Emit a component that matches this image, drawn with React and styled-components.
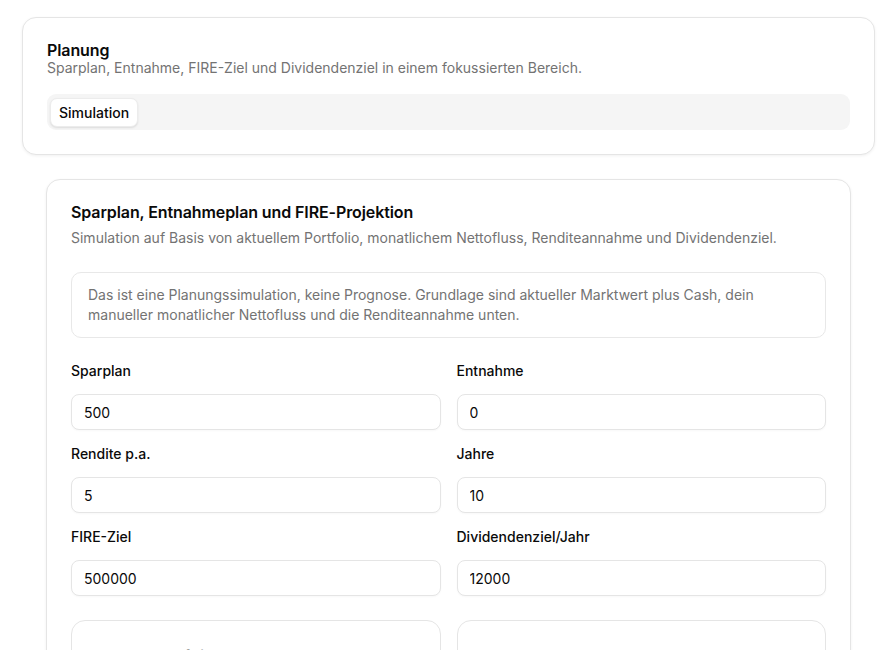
import styled, { createGlobalStyle } from "styled-components";

const GlobalStyle = createGlobalStyle`
  * { box-sizing: border-box; }
  body {
    margin: 0;
    background: #ffffff;
    font-family: Inter, "Noto Sans", sans-serif;
    color: #0a0a0a;
    -webkit-font-smoothing: antialiased;
  }
`;

const Page = styled.div`
  padding: 17px 15px 0 22px;
  display: flex;
  flex-direction: column;
  gap: 24px;
`;

const Card = styled.section`
  background: #fff;
  border: 1px solid #e5e5e5;
  border-radius: 14px;
  box-shadow: 0 1px 3px rgba(0, 0, 0, 0.06);
  padding: 23px 24px 24px;
`;

const Section = styled.div`
  padding: 0 24px;
`;

const Title = styled.h2`
  margin: 0;
  font-size: 16px;
  font-weight: 600;
  line-height: 18px;
  letter-spacing: -0.1px;
`;

const Subtitle = styled.p`
  margin: ${(p) => (p.gap ? "7px 0 0" : "0")};
  font-size: 14px;
  line-height: ${(p) => (p.gap ? "20px" : "18px")};
  color: #737373;
`;

const TabList = styled.div`
  margin-top: 17px;
  background: #f5f5f5;
  border-radius: 9px;
  padding: 3px;
  display: flex;
  height: 36px;
`;

const Tab = styled.button`
  font-family: inherit;
  font-size: 14px;
  font-weight: 500;
  color: #0a0a0a;
  background: #fff;
  border: 1px solid #ececec;
  border-radius: 7px;
  box-shadow: 0 1px 2px rgba(0, 0, 0, 0.1);
  padding: 0 8px;
  height: 29px;
  margin-top: 1px;
  cursor: pointer;
`;

const Note = styled.div`
  margin-top: 24px;
  border: 1px solid #e8e8e8;
  border-radius: 10px;
  padding: 12px 16px;
  font-size: 14px;
  line-height: 20px;
  color: #737373;
`;

const FieldGrid = styled.div`
  margin-top: 24px;
  display: grid;
  grid-template-columns: 1fr 1fr;
  column-gap: 16px;
  row-gap: 15px;
`;

const Field = styled.label`
  display: flex;
  flex-direction: column;
  gap: 14px;
`;

const Label = styled.span`
  font-size: 14px;
  font-weight: 500;
  line-height: 18px;
  color: #0a0a0a;
`;

const Input = styled.input`
  height: 36px;
  border: 1px solid #e5e5e5;
  border-radius: 8px;
  padding: 0 12px;
  font-family: inherit;
  font-size: 14px;
  color: #0a0a0a;
  background: #fff;
  box-shadow: 0 1px 2px rgba(0, 0, 0, 0.03);
  outline: none;
`;

const StatGrid = styled.div`
  margin-top: 24px;
  display: grid;
  grid-template-columns: 1fr 1fr;
  gap: 16px;
`;

const StatCard = styled.div`
  border: 1px solid #e5e5e5;
  border-radius: 14px;
  padding: 26px 28px;
  height: 120px;
`;

const StatLabel = styled.div`
  font-size: 13px;
  color: #a3a3a3;
`;

const fields = [
  { label: "Sparplan", value: "500" },
  { label: "Entnahme", value: "0" },
  { label: "Rendite p.a.", value: "5" },
  { label: "Jahre", value: "10" },
  { label: "FIRE-Ziel", value: "500000" },
  { label: "Dividendenziel/Jahr", value: "12000" },
];

export default function App() {
  return (
    <>
      <GlobalStyle />
      <Page>
        <Card>
          <Title>Planung</Title>
          <Subtitle>
            Sparplan, Entnahme, FIRE-Ziel und Dividendenziel in einem fokussierten Bereich.
          </Subtitle>
          <TabList>
            <Tab>Simulation</Tab>
          </TabList>
        </Card>

        <Section>
          <Card>
            <Title>Sparplan, Entnahmeplan und FIRE-Projektion</Title>
            <Subtitle gap>
              Simulation auf Basis von aktuellem Portfolio, monatlichem Nettofluss, Renditeannahme und Dividendenziel.
            </Subtitle>
            <Note>
              Das ist eine Planungssimulation, keine Prognose. Grundlage sind aktueller Marktwert plus Cash, dein
              manueller monatlicher Nettofluss und die Renditeannahme unten.
            </Note>
            <FieldGrid>
              {fields.map((f) => (
                <Field key={f.label}>
                  <Label>{f.label}</Label>
                  <Input defaultValue={f.value} />
                </Field>
              ))}
            </FieldGrid>
            <StatGrid>
              <StatCard>
                <StatLabel>Aktuelles Portfolio</StatLabel>
              </StatCard>
              <StatCard>
                <StatLabel>Endwert</StatLabel>
              </StatCard>
            </StatGrid>
          </Card>
        </Section>
      </Page>
    </>
  );
}
